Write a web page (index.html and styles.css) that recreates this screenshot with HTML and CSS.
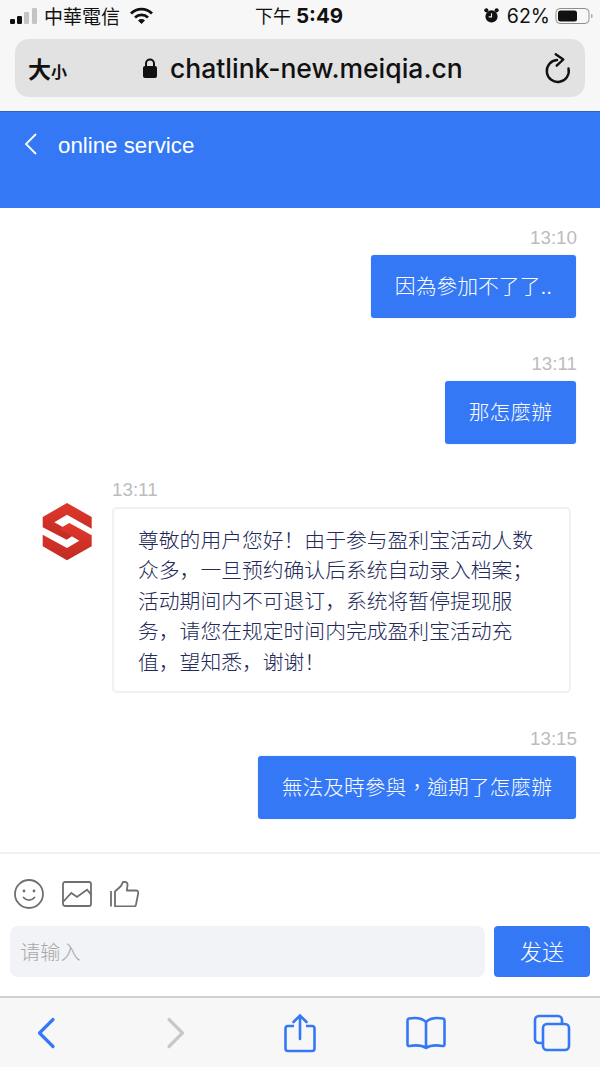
FILE: index.html
```html
<!DOCTYPE html>
<html lang="zh-Hant">
<head>
    <meta charset="UTF-8">
    <link rel="stylesheet" href="styles.css">
</head>
<body>
    <div class="statusBar">
        <div class="statusLeft">
            <svg class="signal" width="27" height="18" viewBox="0 0 27 18">
                <rect x="0" y="12" width="5" height="5" rx="1.200" fill="#111"/>
                <rect x="7" y="9" width="5" height="8" rx="1.200" fill="#111"/>
                <rect x="14" y="5" width="5" height="12" rx="1.200" fill="#c4c4c4"/>
                <rect x="22" y="1" width="5" height="16" rx="1.200" fill="#c4c4c4"/>
            </svg>
            <span class="carrier">中華電信</span>
            <svg class="wifi" width="25" height="18" viewBox="0 0 25 18">
                <path d="M2 6.500a15 15 0 0 1 21 0M6 10.500a9.500 9.500 0 0 1 13 0" fill="none" stroke="#111" stroke-width="2.800"/>
                <path d="M12.500 17l-3.500-3.500a5 5 0 0 1 7 0z" fill="#111"/>
            </svg>
        </div>
        <div class="clock">下午 <b>5:49</b></div>
        <div class="statusRight">
            <svg width="15" height="17" viewBox="0 0 16 17">
                <circle cx="8" cy="9.500" r="6.500" fill="#111"/>
                <circle cx="2.500" cy="3" r="2.200" fill="#111"/>
                <circle cx="13.500" cy="3" r="2.200" fill="#111"/>
                <path d="M8 6v4H5" fill="none" stroke="#eee" stroke-width="1.200"/>
            </svg>
            <span class="battery">62%</span>
            <svg width="38" height="18" viewBox="0 0 38 18">
                <rect x="1" y="1.500" width="33" height="15" rx="4" fill="none" stroke="#8e8e8e" stroke-width="1"/>
                <rect x="3" y="3.500" width="19" height="11" rx="2.500" fill="#111"/>
                <rect x="36" y="7" width="1.500" height="4" rx="0.700" fill="#aaa"/>
            </svg>
        </div>
    </div>
    <div class="addressWrap">
        <div class="addressBar">
            <div class="fontSize">大<small>小</small></div>
            <div class="url">
                <svg width="16" height="22" viewBox="0 0 16 22">
                    <path d="M4 10V6.500a4 4 0 0 1 8 0V10" fill="none" stroke="#111" stroke-width="2"/>
                    <rect x="1" y="9" width="14" height="12" rx="2" fill="#111"/>
                </svg>
                <span>chatlink-new.meiqia.cn</span>
            </div>
            <svg class="reload" width="30" height="36" viewBox="0 0 30 36">
                <path d="M14 10A11 11 0 1 0 25.500 18.500" fill="none" stroke="#111" stroke-width="2.400" stroke-linecap="round"/>
                <path d="M12.700 4.300L20.300 9.500 13.700 15.700" fill="none" stroke="#111" stroke-width="2.400" stroke-linecap="round" stroke-linejoin="round"/>
            </svg>
        </div>
    </div>

    <div class="header">
        <svg width="14" height="22" viewBox="0 0 14 22">
            <path d="M12 1L2 11l10 10" fill="none" stroke="#fff" stroke-width="1.800"/>
        </svg>
        <span class="headerTitle">online service</span>
    </div>

    <div class="chat">
        <div class="msg msgMine">
            <div class="time">13:10</div>
            <div class="bubble bubbleMine">因為參加不了了..</div>
        </div>
        <div class="msg msgMine">
            <div class="time">13:11</div>
            <div class="bubble bubbleMine">那怎麼辦</div>
        </div>
        <div class="msg msgAgent">
            <svg class="avatar" width="64" height="66" viewBox="0 0 64 66">
                <defs>
                    <linearGradient id="logoRed" x1="0" y1="0" x2="0" y2="1">
                        <stop offset="0" stop-color="#e2372c"/>
                        <stop offset="1" stop-color="#c02c23"/>
                    </linearGradient>
                </defs>
                <rect width="64" height="66" fill="#fff"/>
                <path fill="url(#logoRed)" d="M31 5L55.700 19V30.700L31 16.700L18.300 24.300L39.300 36L30.700 41.700L6.700 29.300V19Z"/>
                <path fill="url(#logoRed)" d="M31 62.300L6.700 48.300V36.700L31 50L43.300 42.700L23.300 30.700L33.300 25L55.700 37.300V48.300Z"/>
            </svg>
            <div class="agentBody">
                <div class="time">13:11</div>
                <div class="bubble bubbleAgent" lang="zh-Hans">尊敬的用户您好！由于参与盈利宝活动人数众多，一旦预约确认后系统自动录入档案；活动期间内不可退订，系统将暂停提现服务，请您在规定时间内完成盈利宝活动充值，望知悉，谢谢！</div>
            </div>
        </div>
        <div class="msg msgMine">
            <div class="time">13:15</div>
            <div class="bubble bubbleMine">無法及時參與，逾期了怎麼辦</div>
        </div>
    </div>

    <div class="composer">
        <div class="tools">
            <svg width="30" height="30" viewBox="0 0 30 30">
                <circle cx="15" cy="15" r="14" fill="none" stroke="#6f6f6f" stroke-width="1.800"/>
                <circle cx="10" cy="12" r="1.400" fill="#6f6f6f"/>
                <circle cx="20" cy="12" r="1.400" fill="#6f6f6f"/>
                <path d="M9.500 18.500c3 3.500 8 3.500 11 0" fill="none" stroke="#6f6f6f" stroke-width="1.800" stroke-linecap="round"/>
            </svg>
            <svg width="30" height="26" viewBox="0 0 30 26">
                <rect x="1" y="1" width="28" height="24" rx="2" fill="none" stroke="#6f6f6f" stroke-width="1.800"/>
                <path d="M1 21L9.300 12 15 16 25 8.700 29.500 14" fill="none" stroke="#6f6f6f" stroke-width="1.800"/>
            </svg>
            <svg width="29" height="26" viewBox="0 0 29 26">
                <path d="M1 10v15.500" fill="none" stroke="#6f6f6f" stroke-width="1.800"/>
                <path d="M5 10.500L11 5 13 1c3-.7 5 1 4.500 3.500l-.7 5h9.200c1.700 0 2.500 1.200 2.200 2.800L26 23.500c-.3 1.300-1 2-2.300 2H5Z" fill="none" stroke="#6f6f6f" stroke-width="1.800" stroke-linejoin="round"/>
            </svg>
        </div>
        <div class="inputRow" lang="zh-Hans">
            <div class="input">请输入</div>
            <div class="send">发送</div>
        </div>
    </div>

    <div class="toolbar">
        <svg width="20" height="32" viewBox="0 0 20 32">
            <path d="M17 2.500L3.500 16 17 29.500" fill="none" stroke="#3478f6" stroke-width="3.200" stroke-linecap="round" stroke-linejoin="round"/>
        </svg>
        <svg class="navForward" width="20" height="32" viewBox="0 0 20 32">
            <path d="M3 2.500L16.500 16 3 29.500" fill="none" stroke="#c8c8c8" stroke-width="3.200" stroke-linecap="round" stroke-linejoin="round"/>
        </svg>
        <svg class="navShare" width="32" height="40" viewBox="0 0 32 40">
            <path d="M10 13H4a2.500 2.500 0 0 0-2.500 2.500v20A2.500 2.500 0 0 0 4 38h24a2.500 2.500 0 0 0 2.500-2.500v-20A2.500 2.500 0 0 0 28 13h-6" fill="none" stroke="#3478f6" stroke-width="2.600"/>
            <path d="M16 26V3M9.500 9L16 2.500 22.500 9" fill="none" stroke="#3478f6" stroke-width="2.600" stroke-linecap="round"/>
        </svg>
        <svg class="navBook" width="40" height="34" viewBox="0 0 40 34">
            <path d="M20 6C16 2 9 1.500 3 2.500 2 2.700 1.500 3.300 1.500 4.500v24c0 1 .7 1.700 2 1.500 6-1 12-1 16.500 2 4.500-3 10.500-3 16.500-2 1.300.2 2-.5 2-1.500v-24c0-1.200-.5-1.800-1.500-2C31 1.500 24 2 20 6ZM20 6v26" fill="none" stroke="#3478f6" stroke-width="2.600"/>
        </svg>
        <svg class="navTabs" width="38" height="38" viewBox="0 0 38 38">
            <path d="M10 29H6a4 4 0 0 1-4-4V6a4 4 0 0 1 4-4h19a4 4 0 0 1 4 4v4" fill="none" stroke="#3478f6" stroke-width="2.600"/>
            <rect x="10" y="10" width="26" height="26" rx="4" fill="none" stroke="#3478f6" stroke-width="2.600"/>
        </svg>
    </div>
</body>
</html>
```

FILE: styles.css
```css
*{box-sizing: border-box}
html,body{margin: 0;padding: 0}
body{width: 600px;height: 1067px;overflow: hidden;background: #fff;display: flex;flex-direction: column;font-family: "Liberation Sans","Noto Sans CJK TC",sans-serif}

.statusBar{height: 37px;background: #f7f7f7;display: flex;align-items: center;justify-content: space-between;padding: 0 10px 6px;position: relative;color: #111}
.statusLeft{display: flex;align-items: center;gap: 7px}
.carrier{font-size: 19px}
.wifi{margin-left: 2px}
.clock{position: absolute;left: 255px;top: 4px;font-size: 18px;line-height: 24px}
.clock b{font-family: Inter,"Liberation Sans",sans-serif;font-weight: 700;font-size: 20.500px}
.statusRight{display: flex;align-items: center;gap: 7px;margin-right: -3px}
.battery{font-family: Inter,"Liberation Sans",sans-serif;font-size: 19.500px;margin-left: 1px;margin-right: -2px}

.addressWrap{height: 75px;background: #f7f7f7;padding: 2px 15px 0;border-bottom: 1px solid #2c62c4}
.addressBar{height: 58px;background: #e2e2e2;border-radius: 14px;display: flex;align-items: center;padding: 0 12px 0 13px;color: #111}
.fontSize{width: 114px;font-size: 23px;font-weight: 700}
.fontSize small{font-size: 16px}
.url{display: flex;align-items: center;gap: 12px;font-family: Inter,"Liberation Sans",sans-serif;font-size: 26.500px;font-weight: 500;white-space: nowrap;flex: 1}
.reload{flex: none}

.header{height: 96px;background: #3478f6;display: flex;align-items: flex-start;gap: 20px;padding: 21px 24px 0;color: #fff}
.headerTitle{font-size: 22.300px;line-height: 26px}

.chat{height: 646px;background: #fff;border-bottom: 2px solid #f0f0f0;padding-top: 18px;display: flex;flex-direction: column;gap: 34px}
.msg{display: flex}
.msgMine{flex-direction: column;align-items: flex-end;padding-right: 24px}
.msgAgent{padding-left: 36px;gap: 12px}
.avatar{margin-top: 20px;flex: none}
.agentBody{width: 459px}
.time{font-size: 18.800px;line-height: 24px;color: #bcbcbc;margin-bottom: 5px;margin-right: -1px}
.bubble{font-size: 20.800px;font-weight: 300;border-radius: 3px}
.bubbleMine{height: 63px;padding: 0 24px;line-height: 64px;background: #3478f6;color: #fff;box-shadow: 0 0 2px #d5e2f7}
.bubbleAgent{height: 186px;padding: 14.500px 24px 0;line-height: 30.500px;color: #232a58;border: 2px solid #f1f1f4;border-radius: 5px;background: #fff;font-family: "Noto Sans CJK SC",sans-serif}

.composer{height: 142px;background: #fff;padding: 23px 10px 0}
.tools{display: flex;align-items: center;gap: 18px;height: 34px;padding-left: 4px}
.inputRow{display: flex;gap: 9px;margin-top: 15px;font-family: "Noto Sans CJK SC",sans-serif}
.input{width: 475px;height: 51px;background: #f2f3f7;border-radius: 8px;line-height: 51px;padding-left: 10px;font-size: 20.300px;font-weight: 300;color: #a8a8a8}
.send{width: 96px;height: 51px;background: #3478f6;border-radius: 4px;line-height: 48px;text-align: center;font-size: 22px;font-weight: 300;color: #fff}

.toolbar{height: 71px;background: #f7f7f7;border-top: 2px solid #d0d0d0;display: flex;align-items: center;padding-left: 36px}
.navForward{margin-left: 110px}
.navShare{margin-left: 98px}
.navBook{margin-left: 90px}
.navTabs{margin-left: 87px}
```
